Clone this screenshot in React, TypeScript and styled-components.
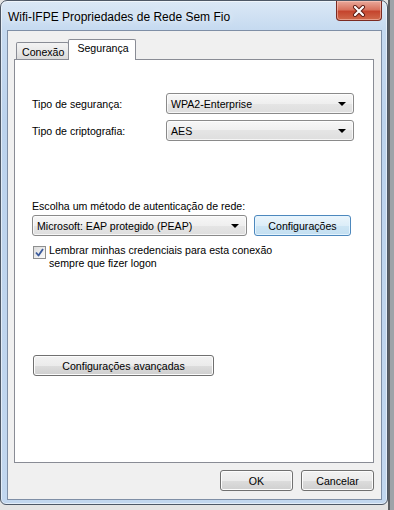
import * as React from "react";
import styled, { createGlobalStyle } from "styled-components";

const GlobalStyle = createGlobalStyle`
	html, body {
		margin: 0;
		padding: 0;
		background: #e4e4e4;
	}

	body {
		font-family: "Liberation Sans", Arial, sans-serif;
		font-size: 10.6px;
		color: #000;
	}
`;

const Desktop = styled.div`
	width: 394px;
	height: 510px;
	overflow: hidden;
	background: linear-gradient(
		to right,
		#e4e4e4 388px,
		#5c5f63 388px,
		#5c5f63 390px,
		#9ea3a8 390px
	);
`;

const Window = styled.div`
	box-sizing: border-box;
	width: 388px;
	height: 505px;
	display: flex;
	flex-direction: column;
	padding: 0 5px 4px 6px;
	border: 1px solid #4e5866;
	border-radius: 7px 7px 6px 6px;
	background: linear-gradient(#dbe8f6, #c6daf0 28px, #bcd3ed 120px, #c2d7ef);
	box-shadow: inset 0 0 0 1px rgba(255, 255, 255, 0.55);
`;

const TitleBar = styled.div`
	height: 29px;
	display: flex;
	justify-content: space-between;
	align-items: flex-start;
`;

const Title = styled.div`
	padding: 9px 0 0 1px;
	font-size: 12px;
	line-height: 14px;
	color: #000;
	text-shadow: 0 0 6px rgba(255, 255, 255, 0.9);
`;

const CloseButton = styled.div`
	box-sizing: border-box;
	width: 46px;
	height: 20px;
	display: flex;
	align-items: center;
	justify-content: center;
	border: 1px solid #7b2a22;
	border-top: none;
	border-radius: 0 0 4px 4px;
	background: linear-gradient(#e9a99b, #d8735f 45%, #c5452e 55%, #d06a4c);
	box-shadow: inset 0 0 0 1px rgba(255, 210, 200, 0.5);
`;

const Client = styled.div`
	flex: 1;
	display: flex;
	flex-direction: column;
	padding: 8px 7px 0 6px;
	border: 1px solid #7f8fa6;
	background: #f0f0f0;
`;

const TabStrip = styled.div`
	height: 20px;
	display: flex;
	align-items: flex-end;
	padding-left: 2px;
`;

const Tab = styled.div<{ $active?: boolean }>`
	box-sizing: border-box;
	height: ${(p) => (p.$active ? "21px" : "17px")};
	margin-bottom: ${(p) => (p.$active ? "-1px" : "0")};
	margin-left: ${(p) => (p.$active ? "-1px" : "0")};
	padding: ${(p) => (p.$active ? "2px 6px 0 8px" : "3px 4px 0 5px")};
	border: 1px solid #898c95;
	border-bottom: none;
	border-radius: 2px 2px 0 0;
	background: ${(p) =>
		p.$active ? "#fff" : "linear-gradient(#f3f3f3, #e9e9e9 50%, #dadada)"};
	position: relative;
	z-index: ${(p) => (p.$active ? 1 : 0)};
	line-height: 13px;
	white-space: nowrap;
`;

const Panel = styled.div`
	box-sizing: border-box;
	height: 404px;
	padding: 33px 0 0 17px;
	border: 1px solid #898c95;
	background: #fff;
`;

const FieldRow = styled.div<{ $gap?: number }>`
	display: flex;
	align-items: center;
	margin-top: ${(p) => p.$gap ?? 0}px;
`;

const Label = styled.div<{ $width?: number }>`
	width: ${(p) => (p.$width ? `${p.$width}px` : "auto")};
	flex-shrink: 0;
	line-height: 14px;
`;

const Select = styled.div<{ $width: number }>`
	box-sizing: border-box;
	width: ${(p) => p.$width}px;
	height: 21px;
	display: flex;
	align-items: center;
	justify-content: space-between;
	padding: 0 7px 0 4px;
	border: 1px solid #8a8a8a;
	border-radius: 3px;
	background: linear-gradient(#f7f7f7, #efefef 50%, #e5e5e5 50%, #dedede);
	box-shadow: inset 0 0 0 1px rgba(255, 255, 255, 0.7);
	white-space: nowrap;
`;

const Arrow = styled.span`
	width: 0;
	height: 0;
	border-left: 4px solid transparent;
	border-right: 4px solid transparent;
	border-top: 4px solid #000;
`;

const SectionLabel = styled.div`
	margin-top: 58px;
	line-height: 14px;
`;

const Button = styled.div<{ $width: number; $focused?: boolean }>`
	box-sizing: border-box;
	width: ${(p) => p.$width}px;
	height: 21px;
	display: flex;
	align-items: center;
	justify-content: center;
	flex-shrink: 0;
	border: 1px solid ${(p) => (p.$focused ? "#4d88bd" : "#707070")};
	border-radius: 3px;
	background: ${(p) =>
		p.$focused
			? "linear-gradient(#ebf5fb, #dcedf8 50%, #cde5f4 50%, #c3dff1)"
			: "linear-gradient(#f2f2f2, #ebebeb 50%, #dddddd 50%, #cfcfcf)"};
	box-shadow: inset 0 0 0 1px
		${(p) => (p.$focused ? "rgba(230, 245, 255, 0.9)" : "#fcfcfc")};
	white-space: nowrap;
`;

const AuthRow = styled.div`
	display: flex;
	gap: 7px;
	margin-top: 2px;
`;

const CheckRow = styled.div`
	display: flex;
	align-items: flex-start;
	gap: 3px;
	margin-top: 8px;
	padding-left: 1px;
`;

const CheckBox = styled.div`
	box-sizing: border-box;
	width: 13px;
	height: 13px;
	margin-top: 2px;
	flex-shrink: 0;
	border: 1px solid #8e8f8f;
	background: linear-gradient(135deg, #dcdcdc, #fbfbfb);
	display: flex;
	align-items: center;
	justify-content: center;
`;

const CheckText = styled.div`
	line-height: 13px;
`;

const AdvancedWrap = styled.div`
	margin-top: 85px;
	padding-left: 1px;
`;

const Footer = styled.div`
	display: flex;
	justify-content: flex-end;
	gap: 8px;
	margin-top: 7px;
`;

const Check = () => (
	<svg width="9" height="9" viewBox="0 0 9 9">
		<path
			d="M1 4.5 L3.5 7.5 L8 1"
			fill="none"
			stroke="#3a5a9c"
			strokeWidth="1.8"
			strokeLinejoin="round"
		/>
	</svg>
);

const CloseGlyph = () => (
	<svg width="14" height="12" viewBox="0 0 14 12">
		<path
			d="M3 2 L11 10 M11 2 L3 10"
			stroke="#5b1a12"
			strokeWidth="4"
			strokeLinecap="round"
		/>
		<path
			d="M3 2 L11 10 M11 2 L3 10"
			stroke="#fff"
			strokeWidth="2.2"
			strokeLinecap="round"
		/>
	</svg>
);

export default function App() {
	return (
		<>
			<GlobalStyle />
			<Desktop>
				<Window>
					<TitleBar>
						<Title>Wifi-IFPE Propriedades de Rede Sem Fio</Title>
						<CloseButton>
							<CloseGlyph />
						</CloseButton>
					</TitleBar>
					<Client>
						<TabStrip>
							<Tab>Conexão</Tab>
							<Tab $active>Segurança</Tab>
						</TabStrip>
						<Panel>
							<FieldRow>
								<Label $width={134}>Tipo de segurança:</Label>
								<Select $width={188}>
									WPA2-Enterprise
									<Arrow />
								</Select>
							</FieldRow>
							<FieldRow $gap={6}>
								<Label $width={134}>Tipo de criptografia:</Label>
								<Select $width={188}>
									AES
									<Arrow />
								</Select>
							</FieldRow>
							<SectionLabel>Escolha um método de autenticação de rede:</SectionLabel>
							<AuthRow>
								<Select $width={215}>
									Microsoft: EAP protegido (PEAP)
									<Arrow />
								</Select>
								<Button $width={97} $focused>
									Configurações
								</Button>
							</AuthRow>
							<CheckRow>
								<CheckBox>
									<Check />
								</CheckBox>
								<CheckText>
									Lembrar minhas credenciais para esta conexão
									<br />
									sempre que fizer logon
								</CheckText>
							</CheckRow>
							<AdvancedWrap>
								<Button $width={181}>Configurações avançadas</Button>
							</AdvancedWrap>
						</Panel>
						<Footer>
							<Button $width={73}>OK</Button>
							<Button $width={73}>Cancelar</Button>
						</Footer>
					</Client>
				</Window>
			</Desktop>
		</>
	);
}
